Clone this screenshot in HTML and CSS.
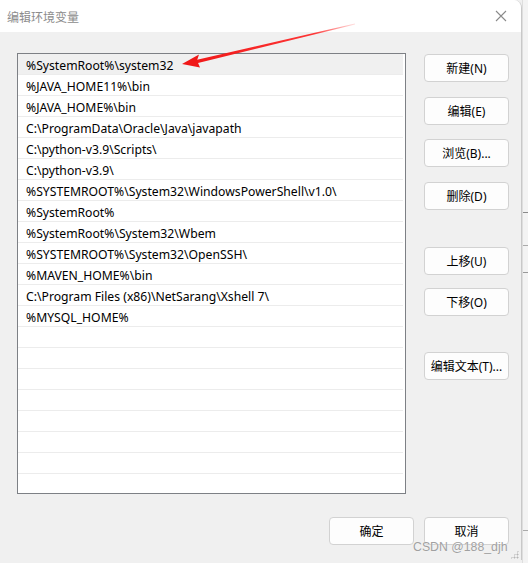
FILE: index.html
```html
<!DOCTYPE html>
<html lang="zh-CN">
<head>
<meta charset="utf-8">
<title>编辑环境变量</title>
<link rel="stylesheet" href="styles.css">
</head>
<body>
<div class="desk">
  <div class="window">
    <div class="titlebar">
      <span class="title">编辑环境变量</span>
      <svg class="close" width="12" height="12" viewBox="0 0 12 12"><path d="M1 1L11 11M11 1L1 11" stroke="#8a8a8a" stroke-width="1.1" fill="none"/></svg>
    </div>
    <div class="content">
      <div class="main">
        <div class="list">
          <div class="row sel">%SystemRoot%\system32</div>
          <div class="row">%JAVA_HOME11%\bin</div>
          <div class="row">%JAVA_HOME%\bin</div>
          <div class="row">C:\ProgramData\Oracle\Java\javapath</div>
          <div class="row">C:\python-v3.9\Scripts\</div>
          <div class="row">C:\python-v3.9\</div>
          <div class="row">%SYSTEMROOT%\System32\WindowsPowerShell\v1.0\</div>
          <div class="row">%SystemRoot%</div>
          <div class="row">%SystemRoot%\System32\Wbem</div>
          <div class="row">%SYSTEMROOT%\System32\OpenSSH\</div>
          <div class="row">%MAVEN_HOME%\bin</div>
          <div class="row">C:\Program Files (x86)\NetSarang\Xshell 7\</div>
          <div class="row">%MYSQL_HOME%</div>
          <div class="row"></div>
          <div class="row"></div>
          <div class="row"></div>
          <div class="row"></div>
          <div class="row"></div>
          <div class="row"></div>
          <div class="row"></div>
        </div>
        <div class="side">
          <button class="btn s1">新建(N)</button>
          <button class="btn s2">编辑(E)</button>
          <button class="btn s3">浏览(B)...</button>
          <button class="btn s4">删除(D)</button>
          <button class="btn s5">上移(U)</button>
          <button class="btn s6">下移(O)</button>
          <button class="btn s7">编辑文本(T)...</button>
        </div>
      </div>
      <div class="footer">
        <button class="btn">确定</button>
        <button class="btn">取消</button>
      </div>
    </div>
    <div class="grip"></div>
  </div>
  <div class="behind">
    <div class="bl b1"></div>
    <div class="bl b2"></div>
    <div class="bl b3"></div>
    <div class="bl b4"></div>
  </div>
  <svg class="arrow" width="528" height="100" viewBox="0 0 528 100">
    <defs>
      <linearGradient id="g" x1="355" y1="24" x2="190" y2="62" gradientUnits="userSpaceOnUse">
        <stop offset="0" stop-color="#ff3030" stop-opacity="0.15"/>
        <stop offset="0.25" stop-color="#ff2020" stop-opacity="0.9"/>
        <stop offset="1" stop-color="#f01818"/>
      </linearGradient>
    </defs>
    <polygon points="355,23.6 355,24.4 197,63.2 196,60" fill="url(#g)"/>
    <polygon points="182,64 199,54.5 197,60.5 200,67.5" fill="#f01818"/>
  </svg>
  <div class="mark">CSDN @188_djh</div>
</div>
</body>
</html>
```
FILE: styles.css
```css
html, body {
  margin: 0;
  padding: 0;
}
body {
  width: 528px;
  height: 563px;
  overflow: hidden;
  background: #f0f0f0;
  font-family: "Noto Sans", "Noto Sans CJK SC", sans-serif;
  font-size: 12px;
  color: #000;
}
.desk {
  position: relative;
  width: 528px;
  height: 563px;
  display: flex;
}
.window {
  position: relative;
  width: 521px;
  height: 560px;
  background: #f0f0f0;
  border-right: 1px solid #c8c8c8;
  border-top-right-radius: 8px;
  border-bottom-left-radius: 6px;
  overflow: hidden;
  display: flex;
  flex-direction: column;
}
.titlebar {
  height: 32px;
  background: #fff;
  display: flex;
  align-items: center;
  justify-content: space-between;
  padding: 0 14px 0 7px;
}
.title {
  color: #8c8c8c;
  font-size: 12px;
  font-family: "Noto Sans CJK SC", sans-serif;
}
.content {
  flex: 1;
  padding: 21px 12px 0 17px;
}
.main {
  display: flex;
  align-items: flex-start;
}
.list {
  width: 385px;
  height: 439px;
  background: #fff;
  border: 1px solid #7d8085;
  padding-right: 2px;
  overflow: hidden;
}
.row {
  height: 18px;
  padding-top: 2px;
  line-height: 20px;
  border-bottom: 1px solid #ececec;
  padding-left: 8px;
  white-space: nowrap;
  font-size: 12.2px;
}
.row.sel {
  background: #f0f0f0;
}
.side {
  margin-left: 18px;
  display: flex;
  flex-direction: column;
}
.btn {
  width: 85px;
  height: 28px;
  margin: 0;
  padding: 0;
  background: #fdfdfd;
  border: 1px solid #d2d2d2;
  border-radius: 4px;
  font-family: "Noto Sans", "Noto Sans CJK SC", sans-serif;
  font-size: 12px;
  color: #000;
  text-align: center;
}
.side .s1 { margin-top: 1px; }
.side .s2 { margin-top: 15px; }
.side .s3 { margin-top: 14px; }
.side .s4 { margin-top: 15px; }
.side .s5 { margin-top: 37px; }
.side .s6 { margin-top: 13px; }
.side .s7 { margin-top: 36px; }
.footer {
  display: flex;
  justify-content: flex-end;
  gap: 10px;
  margin-top: 23px;
}
.grip {
  position: absolute;
  right: 2px;
  bottom: 1px;
  width: 9px;
  height: 9px;
  background-image: radial-gradient(circle, #b5b5b5 0.9px, transparent 1.1px);
  background-size: 3px 3px;
  clip-path: polygon(100% 0, 100% 100%, 0 100%);
}
.behind {
  position: relative;
  flex: 1;
  height: 563px;
  background: #f3f3f3;
  border-left: 1px solid #dedede;
}
.bl {
  position: absolute;
  left: 0;
  right: 0;
  height: 1px;
  background: #8a8a8a;
}
.b1 { top: 212px; }
.b2 { top: 245px; background: #aaa; }
.b3 { top: 272px; background: #999; }
.b4 { top: 530px; background: #aaa; }
.arrow {
  position: absolute;
  left: 0;
  top: 0;
}
.mark {
  position: absolute;
  left: 413px;
  top: 540px;
  font-family: "Liberation Sans", sans-serif;
  font-size: 12.3px;
  color: #a0a0a0;
  text-shadow: 0 0 1px #fff;
}
```
